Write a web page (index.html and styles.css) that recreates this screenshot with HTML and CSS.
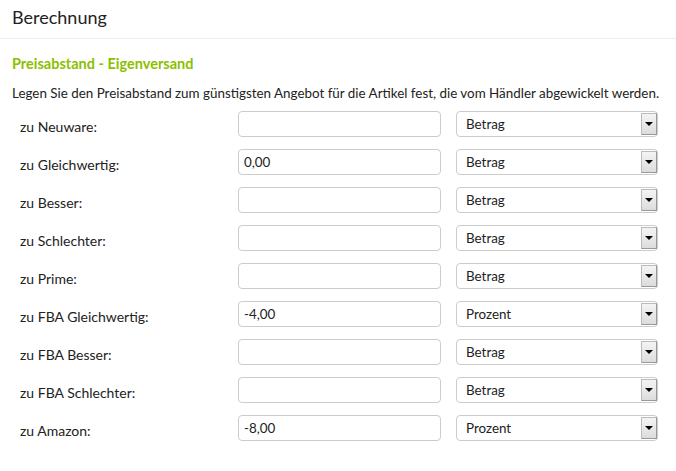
FILE: index.html
```html
<!DOCTYPE html>
<html lang="de">
<head>
  <meta charset="UTF-8">
  <title>Berechnung</title>
  <link rel="stylesheet" href="styles.css">
</head>
<body>
  <h2 class="page-title">Berechnung</h2>

  <div class="section">
    <h3 class="section-title">Preisabstand - Eigenversand</h3>
    <p class="section-desc">Legen Sie den Preisabstand zum günstigsten Angebot für die Artikel fest, die vom Händler abgewickelt werden.</p>

    <div class="form-rows">
      <div class="form-row">
        <label>zu Neuware:</label>
        <input type="text" value="">
        <div class="select-wrap"><select><option>Betrag</option><option>Prozent</option></select><span class="select-btn"></span></div>
      </div>
      <div class="form-row">
        <label>zu Gleichwertig:</label>
        <input type="text" value="0,00">
        <div class="select-wrap"><select><option>Betrag</option><option>Prozent</option></select><span class="select-btn"></span></div>
      </div>
      <div class="form-row">
        <label>zu Besser:</label>
        <input type="text" value="">
        <div class="select-wrap"><select><option>Betrag</option><option>Prozent</option></select><span class="select-btn"></span></div>
      </div>
      <div class="form-row">
        <label>zu Schlechter:</label>
        <input type="text" value="">
        <div class="select-wrap"><select><option>Betrag</option><option>Prozent</option></select><span class="select-btn"></span></div>
      </div>
      <div class="form-row">
        <label>zu Prime:</label>
        <input type="text" value="">
        <div class="select-wrap"><select><option>Betrag</option><option>Prozent</option></select><span class="select-btn"></span></div>
      </div>
      <div class="form-row">
        <label>zu FBA Gleichwertig:</label>
        <input type="text" value="-4,00">
        <div class="select-wrap"><select><option>Betrag</option><option selected>Prozent</option></select><span class="select-btn"></span></div>
      </div>
      <div class="form-row">
        <label>zu FBA Besser:</label>
        <input type="text" value="">
        <div class="select-wrap"><select><option>Betrag</option><option>Prozent</option></select><span class="select-btn"></span></div>
      </div>
      <div class="form-row">
        <label>zu FBA Schlechter:</label>
        <input type="text" value="">
        <div class="select-wrap"><select><option>Betrag</option><option>Prozent</option></select><span class="select-btn"></span></div>
      </div>
      <div class="form-row">
        <label>zu Amazon:</label>
        <input type="text" value="-8,00">
        <div class="select-wrap"><select><option>Betrag</option><option selected>Prozent</option></select><span class="select-btn"></span></div>
      </div>
    </div>
  </div>
</body>
</html>
```

FILE: styles.css
```css
body {
  margin: 0;
  background-color: #ffffff;
  color: #222222;
  font-family: Lato, 'Noto Sans', sans-serif;
  font-size: 13.4px;
}

.page-title {
  margin: 0;
  padding: 5px 12px 0;
  height: 33px;
  font-size: 18px;
  font-weight: normal;
  line-height: 24px;
  border-bottom: 1px solid #eeeeee;
}

.section {
  padding: 15px 12px 0;
}

.section-title {
  margin: 0;
  font-size: 14.5px;
  font-weight: bold;
  line-height: 20px;
  color: #8cbf00;
}

.section-desc {
  margin: 9px 0 0;
  line-height: 20px;
  white-space: nowrap;
}

.form-rows {
  margin-top: 8px;
  display: flex;
  flex-direction: column;
  gap: 12px;
}

.form-row {
  display: grid;
  grid-template-columns: 203px 203px 202px;
  column-gap: 15px;
  align-items: center;
  padding-left: 8px;
}

.form-row label {
  padding-top: 4px;
  font-size: 14px;
}

.form-row input {
  box-sizing: border-box;
  height: 26px;
  padding: 0 5px;
  border: 1px solid #cccccc;
  border-radius: 4px;
  font-family: inherit;
  font-size: 13.4px;
  color: #222222;
}

.select-wrap {
  position: relative;
  height: 26px;
}

.select-wrap select {
  box-sizing: border-box;
  width: 100%;
  height: 26px;
  padding: 0 9px;
  border: 1px solid #cccccc;
  border-radius: 4px;
  background: #ffffff;
  font-family: inherit;
  font-size: 13.4px;
  color: #222222;
  appearance: none;
  -webkit-appearance: none;
}

.select-btn {
  position: absolute;
  top: 2px;
  right: 1px;
  width: 16px;
  height: 22px;
  box-sizing: border-box;
  border: 1px solid #999999;
  border-top-color: #bbbbbb;
  border-left-color: #bbbbbb;
  background: linear-gradient(#f4f4f4, #dcdcdc);
  pointer-events: none;
}

.select-btn::after {
  content: '';
  position: absolute;
  left: 3px;
  top: 8px;
  border-left: 4px solid transparent;
  border-right: 4px solid transparent;
  border-top: 4px solid #000000;
}
```
